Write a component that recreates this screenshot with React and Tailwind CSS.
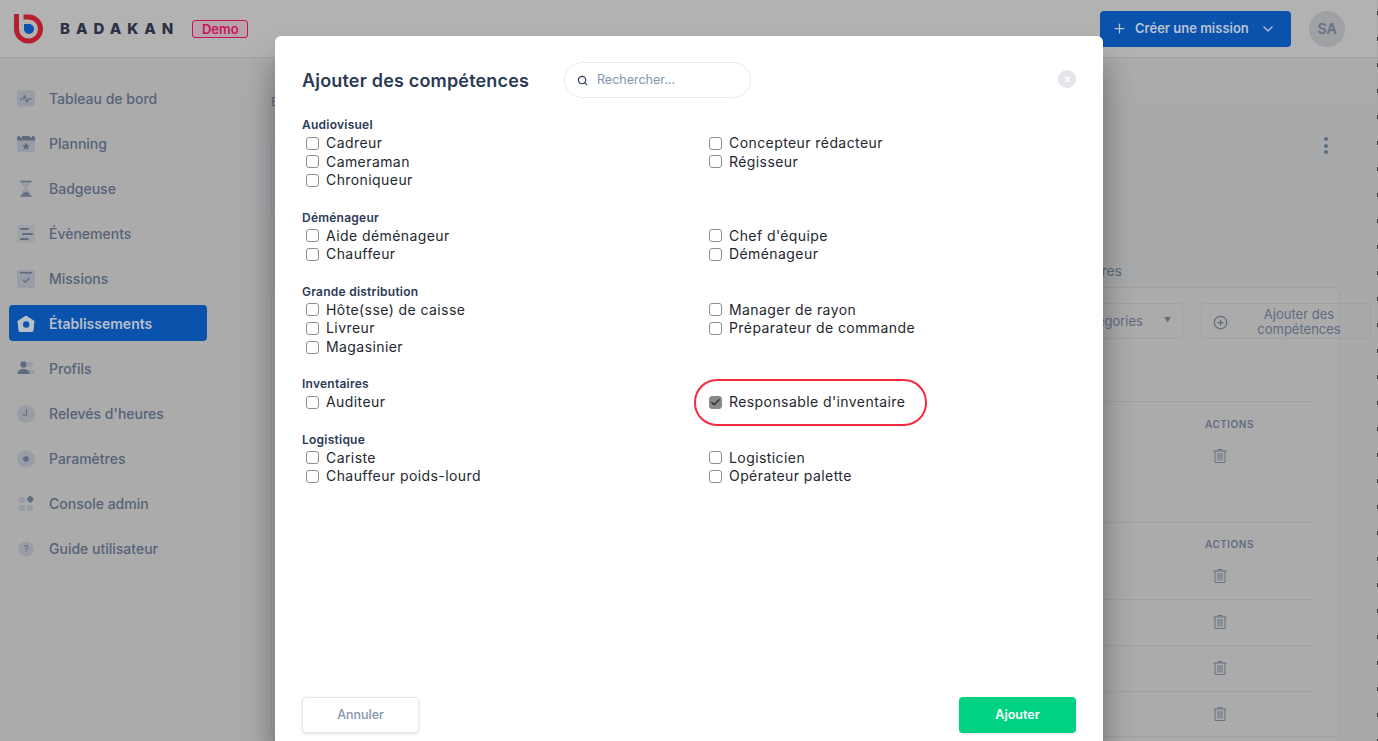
import { Plus, ChevronDown, Search, X, Check, CirclePlus } from 'lucide-react';

const navItems = [
  { label: 'Tableau de bord', icon: 'pulse' },
  { label: 'Planning', icon: 'calendar' },
  { label: 'Badgeuse', icon: 'hourglass' },
  { label: 'Évènements', icon: 'lines' },
  { label: 'Missions', icon: 'missions' },
  { label: 'Établissements', icon: 'home', active: true },
  { label: 'Profils', icon: 'users' },
  { label: "Relevés d'heures", icon: 'clock' },
  { label: 'Paramètres', icon: 'gear' },
  { label: 'Console admin', icon: 'grid' },
  { label: 'Guide utilisateur', icon: 'help' },
];

const groups = [
  { title: 'Audiovisuel', left: ['Cadreur', 'Cameraman', 'Chroniqueur'], right: ['Concepteur rédacteur', 'Régisseur'] },
  { title: 'Déménageur', left: ['Aide déménageur', 'Chauffeur'], right: ["Chef d'équipe", 'Déménageur'] },
  { title: 'Grande distribution', left: ['Hôte(sse) de caisse', 'Livreur', 'Magasinier'], right: ['Manager de rayon', 'Préparateur de commande'] },
  { title: 'Inventaires', left: ['Auditeur'], right: ["Responsable d'inventaire"] },
  { title: 'Logistique', left: ['Cariste', 'Chauffeur poids-lourd'], right: ['Logisticien', 'Opérateur palette'] },
];

function NavIcon({ name }) {
  const soft = '#989da5';
  const dark = '#5f6c80';
  return (
    <svg width="18" height="18" viewBox="0 0 18 18" className="shrink-0">
      {name === 'pulse' && (
        <>
          <rect x="0" y="0.5" width="18" height="16" rx="2" fill={soft} />
          <path d="M3 9h3l1.500-3 2.500 6 1.500-3H15" fill="none" stroke={dark} strokeWidth="1.2" />
        </>
      )}
      {name === 'calendar' && (
        <>
          <rect x="0" y="3" width="18" height="14" rx="2" fill={soft} />
          <path d="M0 5.500V3a2 2 0 012-2h1v1.500h2V1h8v1.500h2V1h1a2 2 0 012 2v2.500z" fill={dark} />
          <path d="M9 7.500l1.200 2.500 2.600.3-1.900 1.800.5 2.600L9 13.400l-2.400 1.300.5-2.600-1.900-1.800 2.600-.3z" fill={dark} />
        </>
      )}
      {name === 'hourglass' && (
        <>
          <path d="M4.500 2h9c0 3-2 5-3.500 6.500 1.500 1.500 3.500 3.500 3.500 6.500h-9c0-3 2-5 3.500-6.500C6.500 7 4.500 5 4.500 2z" fill={soft} />
          <path d="M3.500 1.500h11M3.500 16h11" stroke={dark} strokeWidth="1.5" />
          <path d="M5 15c.5-2 2.500-3 4-3s3.500 1 4 3z" fill={dark} />
        </>
      )}
      {name === 'lines' && (
        <>
          <rect x="0" y="0" width="18" height="18" fill={soft} opacity="0.6" />
          <rect x="3" y="3" width="9" height="2" rx="1" fill={dark} />
          <rect x="5" y="8" width="11" height="2" rx="1" fill={dark} />
          <rect x="3" y="13" width="9" height="2" rx="1" fill={dark} />
        </>
      )}
      {name === 'missions' && (
        <>
          <rect x="0" y="0" width="18" height="18" rx="2" fill={soft} />
          <rect x="3" y="2" width="12" height="1.5" fill={dark} />
          <path d="M6 10l2.200 2.200L12.500 8" fill="none" stroke={dark} strokeWidth="1.2" />
        </>
      )}
      {name === 'home' && (
        <>
          <path d="M9 0.500l8.500 5.500-1 9.500a2 2 0 01-2 1.500h-11a2 2 0 01-2-1.500l-1-9.500z" fill="#b8bfc9" />
          <circle cx="9.200" cy="9.500" r="3.200" fill="#0b52ad" />
        </>
      )}
      {name === 'users' && (
        <>
          <circle cx="13" cy="4.500" r="3" fill={soft} />
          <path d="M11 9.500h5a2 2 0 012 2V14h-6z" fill={soft} />
          <circle cx="6.500" cy="4.500" r="3.200" fill={dark} />
          <path d="M0.500 14c0-3.500 2.500-5 6-5s6 1.500 6 5z" fill={dark} />
        </>
      )}
      {name === 'clock' && (
        <>
          <circle cx="9" cy="9" r="9" fill={soft} />
          <path d="M9.500 4.500v5.500H5.500" fill="none" stroke={dark} strokeWidth="1.2" />
        </>
      )}
      {name === 'gear' && (
        <>
          <path d="M9 0l2.300 1.600 2.700-.3 1.300 2.400 2.400 1.300-.3 2.700L18 9l-.6 1.300.3 2.700-2.400 1.300-1.300 2.400-2.700-.3L9 18l-2.300-1.600-2.700.3-1.300-2.400L.3 13l.3-2.700L0 9l.6-1.300L.3 5 2.700 3.700 4 1.300l2.700.3z" fill={soft} />
          <circle cx="9" cy="9" r="2.800" fill={dark} />
        </>
      )}
      {name === 'grid' && (
        <>
          <rect x="2" y="2" width="6" height="6" rx="1" fill={soft} />
          <rect x="2" y="10" width="6" height="6" rx="1" fill={soft} />
          <rect x="10" y="10" width="6" height="6" rx="1" fill={soft} />
          <rect x="10.500" y="1.500" width="5.500" height="5.500" rx="1" fill={dark} transform="rotate(45 13.250 4.250)" />
        </>
      )}
      {name === 'help' && (
        <>
          <circle cx="9" cy="9" r="7.500" fill={soft} />
          <text x="9" y="12" textAnchor="middle" fontSize="9" fill={dark} fontFamily="Inter, sans-serif">?</text>
        </>
      )}
    </svg>
  );
}

function Logo() {
  return (
    <svg width="30" height="30" viewBox="0 0 30 30" className="shrink-0">
      <path d="M2.500 0v15a12 12 0 1 0 12-12h-5" fill="none" stroke="#b5202c" strokeWidth="5" />
      <path d="M10 10h5a5 5 0 1 1-5 5z" fill="#0b52ad" />
    </svg>
  );
}

function TrashIcon() {
  return (
    <svg width="14" height="14" viewBox="0 0 14 14" fill="none" stroke="#5f6c80" strokeWidth="0.9">
      <path d="M0.500 2h13M5 2V0.500h4V2M2 2v11.500h10V2M5 4v7.500M7 4v7.500M9 4v7.500" />
    </svg>
  );
}

function Sidebar() {
  return (
    <aside className="w-[234px] shrink-0 bg-[#ababab] pl-[9px] pr-[27px] pt-[23px]">
      {navItems.map((item) => (
        <div
          key={item.label}
          className={`flex items-center gap-[14px] pl-2 rounded text-sm ${
            item.active
              ? 'h-9 -mt-px mb-[10px] pt-[2px] bg-[#0b52ad] text-[#b8bfc9] font-semibold'
              : 'h-9 mb-[9px] text-[#566378] font-medium'
          }`}
        >
          <NavIcon name={item.icon} />
          <span>{item.label}</span>
        </div>
      ))}
    </aside>
  );
}

function Header() {
  return (
    <header className="h-[58px] bg-[#b2b2b2] border-b border-[#a5a5a5] flex items-center pl-[14px] pr-8">
      <Logo />
      <span className="ml-4 pt-[2px] text-[15px] font-extrabold tracking-[0.4em] text-[#2b3145]">BADAKAN</span>
      <span className="ml-[13px] mt-px w-14 h-[18px] flex items-center justify-center rounded-[3px] border border-[#c8145a] bg-[#b8a2ab] text-[13px] leading-none font-semibold text-[#c8145a]">
        Demo
      </span>
      <button className="ml-auto w-[191px] h-9 rounded bg-[#0b52ad] text-[#b8c3d3] flex items-center pl-3 text-[13px] font-semibold">
        <Plus size={15} />
        <span className="ml-2 pt-px">Créer une mission</span>
        <ChevronDown size={16} className="ml-[11px]" />
      </button>
      <div className="ml-[18px] w-9 h-9 rounded-full bg-[#9fa1a5] text-[#667085] text-sm font-semibold flex items-center justify-center">
        SA
      </div>
    </header>
  );
}

function Background() {
  return (
    <main className="flex-1 min-w-0 bg-[#a8a9ab] text-[#5f6c80]">
      <div className="h-10 bg-[#ababac]" />
      <div className="pl-[37px]">
        <div className="h-[39px] text-xs leading-[8px]">É</div>
        <div className="flex items-start w-[1069px]">
          <div className="w-[600px] h-[83px] border border-[#9fa0a3] rounded-lg" />
          <div className="ml-auto mr-[12px] flex flex-col gap-[2.5px]">
            <span className="w-1 h-1 rounded-full bg-[#5f6c80]" />
            <span className="w-1 h-1 rounded-full bg-[#5f6c80]" />
            <span className="w-1 h-1 rounded-full bg-[#5f6c80]" />
          </div>
        </div>
        <div className="w-[851px] h-[67px] pt-[41px] text-right text-sm leading-5">Informations complémentaires</div>
        <div className="w-[1069px] h-[450px] bg-[#ababab] border border-[#a0a1a3] rounded-lg">
          <div className="flex justify-end gap-[18px] pt-[15px] -mr-[32px]">
            <div className="w-[200px] h-[36px] pt-px border border-[#a0a1a3] rounded flex items-center justify-end gap-[21px] pr-[11px] text-[13px]">
              <span>Catégories</span>
              <span className="text-[7px]">▼</span>
            </div>
            <div className="w-[170px] h-[36px] pt-[2px] border border-[#a0a1a3] rounded flex items-center pl-[11px] text-[13px] leading-[15px]">
              <CirclePlus size={15} />
              <span className="flex-1 text-center">Ajouter des compétences</span>
            </div>
          </div>
          <div className="mx-[27px] mt-[62px] border-t border-[#a0a1a3] h-[121px] pl-[906px] pt-[15px]">
            <div className="text-[10px] font-semibold tracking-wider">ACTIONS</div>
            <div className="pl-2 pt-[17px]"><TrashIcon /></div>
          </div>
          <div className="mx-[27px] border-t border-[#a0a1a3] h-[77px] pl-[906px] pt-[14px]">
            <div className="text-[10px] font-semibold tracking-wider">ACTIONS</div>
            <div className="pl-2 pt-[17px]"><TrashIcon /></div>
          </div>
          {[0, 1, 2].map((n) => (
            <div key={n} className="mx-[27px] border-t border-[#a0a1a3] h-[46px] pl-[914px] pt-[15px]">
              <TrashIcon />
            </div>
          ))}
        </div>
      </div>
    </main>
  );
}

function SkillRow({ label }) {
  const checked = label === "Responsable d'inventaire";
  return (
    <div className="relative h-[18.6px] flex items-center pl-1">
      {checked && (
        <div className="absolute -left-[11px] -top-[14px] w-[233px] h-[47px] rounded-[23px] border-[2.5px] border-[#f52a3d]" />
      )}
      <span
        className={`relative w-[13px] h-[13px] rounded-[3px] border flex items-center justify-center ${
          checked ? 'bg-[#8a8a8a] border-[#8a8a8a]' : 'bg-white border-[#8f8f8f]'
        }`}
      >
        {checked && <Check size={11} strokeWidth={3.5} className="text-[#333]" />}
      </span>
      <span className="relative ml-[7px] text-sm tracking-[0.03em] text-[#24272e]">{label}</span>
    </div>
  );
}

function SkillsModal() {
  return (
    <div className="absolute inset-0 flex justify-center items-start pt-9">
      <div className="w-[828px] h-[705px] shrink-0 bg-white rounded-t-md shadow-[0_25px_30px_rgba(0,0,0,0.38)] px-[27px] pb-2 flex flex-col">
        <div className="flex items-center h-9 mt-[26px]">
          <h2 className="w-[262px] pt-[2px] text-lg font-semibold tracking-[0.01em] text-[#2b3a55]">Ajouter des compétences</h2>
          <div className="w-[187px] h-9 rounded-full border border-[#e8eaee] flex items-center pl-3 gap-[9px] text-[12.5px] text-[#8496b0]">
            <Search size={11} strokeWidth={2.5} className="text-[#2b3a55]" />
            <span className="pt-px">Rechercher...</span>
          </div>
          <div className="ml-auto -mt-[2px] w-[18px] h-[18px] rounded-full bg-[#e4e6ea] flex items-center justify-center">
            <X size={9} strokeWidth={4} className="text-white" />
          </div>
        </div>
        <div className="mt-[18px]">
          {groups.map((group) => (
            <div key={group.title} className="mb-[18.8px]">
              <div className="h-[18px] text-xs leading-[17px] font-semibold tracking-[0.02em] text-[#2b3a55]">{group.title}</div>
              <div className="grid grid-cols-[403px_1fr]">
                <div>{group.left.map((s) => <SkillRow key={s} label={s} />)}</div>
                <div>{group.right.map((s) => <SkillRow key={s} label={s} />)}</div>
              </div>
            </div>
          ))}
        </div>
        <div className="mt-auto flex justify-between">
          <button className="w-[117px] h-9 rounded border border-[#e4e7ec] text-[12.5px] font-medium text-[#8496b0] shadow-sm">Annuler</button>
          <button className="w-[117px] h-9 rounded bg-[#00d284] text-[12.5px] font-semibold text-white shadow-sm">Ajouter</button>
        </div>
      </div>
    </div>
  );
}

export default function App() {
  return (
    <div className="relative h-[741px] overflow-hidden flex bg-[#ababab]" style={{ fontFamily: 'Inter, "Noto Sans", sans-serif' }}>
      <div className="flex-1 min-w-0">
        <Header />
        <div className="flex h-[683px]">
          <Sidebar />
          <Background />
        </div>
      </div>
      <div className="w-px shrink-0 bg-[repeating-linear-gradient(180deg,#a8a8a8_0px,#a8a8a8_11px,#3a3a3a_11px,#3a3a3a_15px,#a8a8a8_15px,#a8a8a8_26px)]" />
      <SkillsModal />
    </div>
  );
}
